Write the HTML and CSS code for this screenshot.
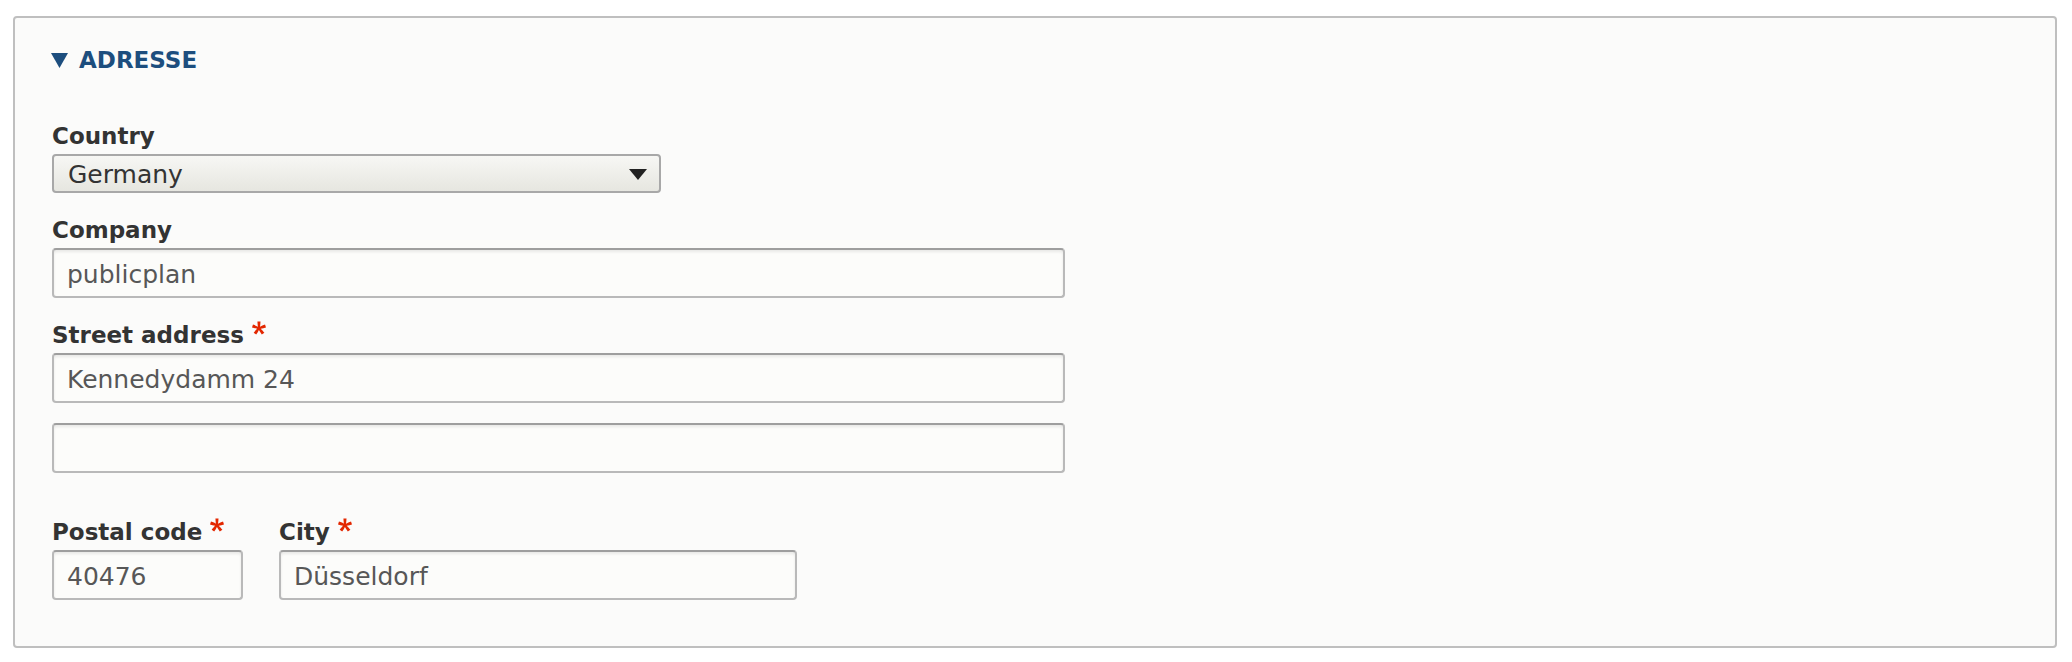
FILE: index.html
```html
<!DOCTYPE html>
<html lang="de">
<head>
<meta charset="utf-8">
<title>Adresse</title>
<link rel="stylesheet" href="styles.css">
</head>
<body>
<div class="fieldset">
  <div class="legend">
    <svg class="legend-arrow" width="17" height="15" viewBox="0 0 17 15"><path d="M0 0H17L8.5 15Z" fill="currentColor"/></svg>
    <span>ADRESSE</span>
  </div>
  <div class="fields">
    <div class="form-item">
      <label class="label">Country</label>
      <div class="select w-select"><span>Germany</span><svg width="18" height="11" viewBox="0 0 18 11"><path d="M0 0H18L9 11Z" fill="#222"/></svg></div>
    </div>
    <div class="form-item">
      <label class="label">Company</label>
      <input class="input w-full" type="text" value="publicplan">
    </div>
    <div class="form-item">
      <label class="label">Street address<svg class="req" width="14" height="14" viewBox="0 0 16 16"><path fill="#e32700" d="M0,7.562l1.114-3.438c2.565,0.906,4.43,1.688,5.59,2.35C6.398,3.553,6.237,1.544,6.22,0.447h3.511c-0.05,1.597-0.234,3.6-0.558,6.003c1.664-0.838,3.566-1.613,5.714-2.325L16,7.562c-2.05,0.678-4.06,1.131-6.028,1.356c0.984,0.856,2.372,2.381,4.166,4.575l-2.906,2.059c-0.935-1.274-2.041-3.009-3.316-5.206c-1.194,2.275-2.244,4.013-3.147,5.206l-2.856-2.059c1.872-2.307,3.211-3.832,4.017-4.575C3.849,8.516,1.872,8.062,0,7.562"/></svg></label>
      <input class="input w-full" type="text" value="Kennedydamm 24">
      <input class="input w-full line2" type="text" value="">
    </div>
    <div class="form-row">
      <div class="form-item">
        <label class="label">Postal code<svg class="req" width="14" height="14" viewBox="0 0 16 16"><path fill="#e32700" d="M0,7.562l1.114-3.438c2.565,0.906,4.43,1.688,5.59,2.35C6.398,3.553,6.237,1.544,6.22,0.447h3.511c-0.05,1.597-0.234,3.6-0.558,6.003c1.664-0.838,3.566-1.613,5.714-2.325L16,7.562c-2.05,0.678-4.06,1.131-6.028,1.356c0.984,0.856,2.372,2.381,4.166,4.575l-2.906,2.059c-0.935-1.274-2.041-3.009-3.316-5.206c-1.194,2.275-2.244,4.013-3.147,5.206l-2.856-2.059c1.872-2.307,3.211-3.832,4.017-4.575C3.849,8.516,1.872,8.062,0,7.562"/></svg></label>
        <input class="input w-postal" type="text" value="40476">
      </div>
      <div class="form-item">
        <label class="label">City<svg class="req" width="14" height="14" viewBox="0 0 16 16"><path fill="#e32700" d="M0,7.562l1.114-3.438c2.565,0.906,4.43,1.688,5.59,2.35C6.398,3.553,6.237,1.544,6.22,0.447h3.511c-0.05,1.597-0.234,3.6-0.558,6.003c1.664-0.838,3.566-1.613,5.714-2.325L16,7.562c-2.05,0.678-4.06,1.131-6.028,1.356c0.984,0.856,2.372,2.381,4.166,4.575l-2.906,2.059c-0.935-1.274-2.041-3.009-3.316-5.206c-1.194,2.275-2.244,4.013-3.147,5.206l-2.856-2.059c1.872-2.307,3.211-3.832,4.017-4.575C3.849,8.516,1.872,8.062,0,7.562"/></svg></label>
        <input class="input w-city" type="text" value="Düsseldorf">
      </div>
    </div>
  </div>
</div>
</body>
</html>
```

FILE: styles.css
```css
html, body {
  margin: 0;
  background: #ffffff;
}
body {
  padding: 16px 15px 14px 13px;
  font-family: "DejaVu Sans", "Liberation Sans", sans-serif;
  color: #333;
}
.fieldset {
  border: 2px solid #bfbfbf;
  border-radius: 4px;
  background: #fbfbfa;
  padding: 28px 37px 45px 37px;
  height: 632px;
  box-sizing: border-box;
}
.legend {
  display: flex;
  align-items: center;
  height: 28px;
  margin-left: -1px;
  color: #1d4e7e;
  font-weight: bold;
  font-size: 23px;
  line-height: 28px;
}
.legend-arrow {
  margin-right: 11px;
  margin-top: 1px;
}
.fields {
  margin-top: 48px;
  display: flex;
  flex-direction: column;
}
.form-item {
  display: flex;
  flex-direction: column;
  align-items: flex-start;
}
.fields > .form-item + .form-item {
  margin-top: 23px;
}
.label {
  font-weight: bold;
  font-size: 23px;
  line-height: 28px;
  color: #333;
  margin-bottom: 4px;
  white-space: nowrap;
}
.req {
  display: inline-block;
  margin-left: 8px;
  vertical-align: 8px;
}
.select {
  box-sizing: border-box;
  height: 39px;
  border: 2px solid #a8a8a8;
  border-radius: 4px;
  background: linear-gradient(#f7f7f4, #e6e6e0);
  display: flex;
  align-items: center;
  justify-content: space-between;
  padding: 2px 12px 0 14px;
  font-size: 25px;
  color: #333;
}
.w-select { width: 609px; }
.input {
  box-sizing: border-box;
  height: 50px;
  margin: 0;
  border: 2px solid #b9b9b9;
  border-top-color: #9e9e9e;
  border-radius: 4px;
  background: #fcfcfa;
  box-shadow: inset 0 2px 3px rgba(0, 0, 0, 0.08);
  padding: 2px 13px 0 13px;
  font-family: "DejaVu Sans", "Liberation Sans", sans-serif;
  font-size: 25px;
  color: #575757;
  outline: none;
}
.w-full { width: 1013px; }
.w-postal { width: 191px; }
.w-city { width: 518px; }
.line2 { margin-top: 20px; }
.form-row {
  display: flex;
  gap: 36px;
  margin-top: 45px;
}
```
